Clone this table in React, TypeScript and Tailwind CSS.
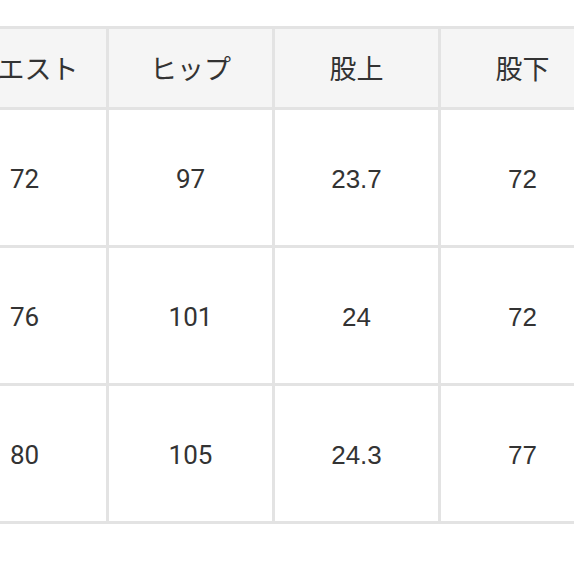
const headers = ["ウエスト", "ヒップ", "股上", "股下"];
const rows = [
  ["72", "97", "23.7", "72"],
  ["76", "101", "24", "72"],
  ["80", "105", "24.3", "77"],
];

export default function App() {
  return (
    <div className="w-[574px] h-[574px] bg-white overflow-hidden pt-[26px]">
      <div className="ml-[-60px] w-max bg-[#e3e3e3] p-[3px] grid grid-cols-[repeat(4,163px)] gap-[3px] text-[#333]">
        {headers.map((h) => (
          <div
            key={h}
            className="h-[78px] bg-[#f5f5f5] flex items-center justify-center text-[27px] whitespace-nowrap"
            style={{ fontFamily: '"Noto Sans CJK JP", sans-serif' }}
          >
            {h}
          </div>
        ))}
        {rows.map((r, i) =>
          r.map((v, j) => (
            <div
              key={i + "-" + j}
              className={
                "h-[135px] pt-[4px] bg-white flex items-center justify-center text-[26px] " +
                (j < 2 ? "font-['Roboto',sans-serif]" : "font-['Liberation_Sans',sans-serif]")
              }
            >
              {v}
            </div>
          ))
        )}
      </div>
    </div>
  );
}
